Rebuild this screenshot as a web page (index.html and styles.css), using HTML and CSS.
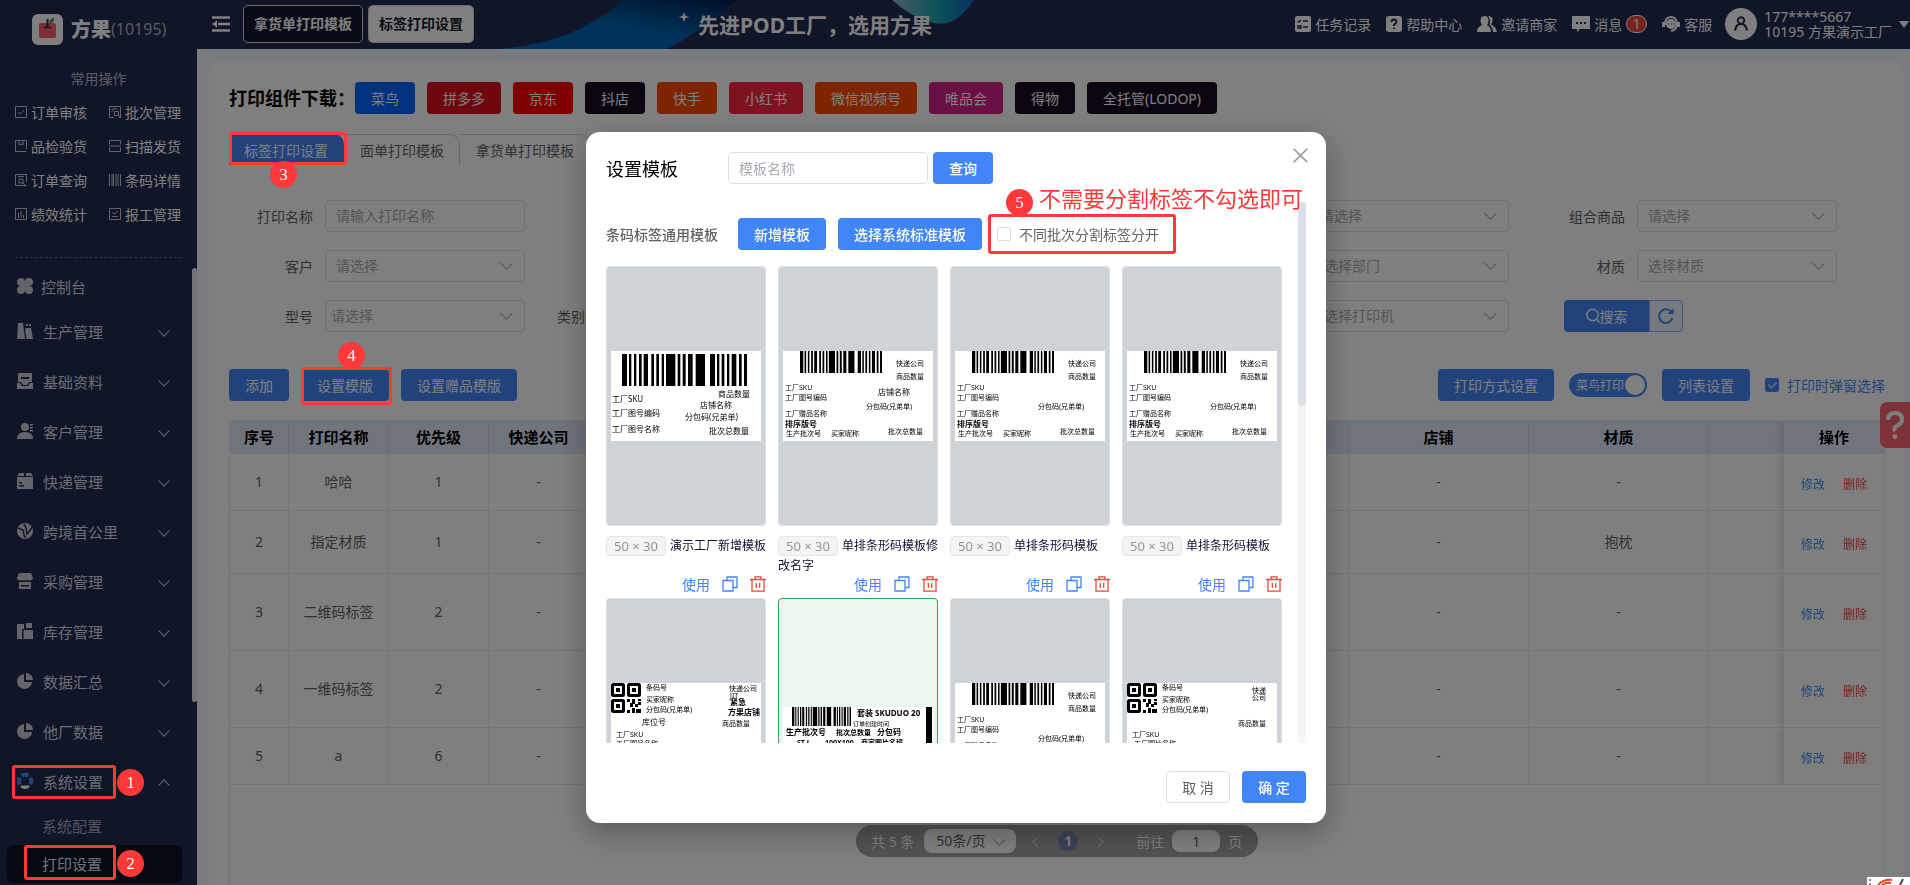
FILE: index.html
```html
<!DOCTYPE html>
<html lang="zh-CN">
<head>
<meta charset="utf-8">
<title>标签打印设置 - 方果</title>
<link rel="stylesheet" href="styles.css">
</head>
<body>
<svg class="defs" aria-hidden="true">
  <symbol id="bars" viewBox="96 0 375 10" preserveAspectRatio="none"><path d="M96 0h15v10h-15zM117 0h7v10h-7zM132 0h7v10h-7zM147 0h8v10h-8zM161 0h13v10h-13zM184 0h8v10h-8zM199 0h8v10h-8zM215 0h7v10h-7zM228 0h28v10h-28zM263 0h8v10h-8zM278 0h9v10h-9zM294 0h14v10h-14zM317 0h28v10h-28zM360 0h15v10h-15zM381 0h7v10h-7zM395 0h8v10h-8zM411 0h7v10h-7zM425 0h14v10h-14zM447 0h8v10h-8zM462 0h9v10h-9z"/></symbol>
  <symbol id="qr" viewBox="0 0 30 30"><g fill="none" stroke="#000" stroke-width="3"><rect x="1.500" y="1.500" width="11" height="11" rx="1"/><rect x="17.500" y="1.500" width="11" height="11" rx="1"/><rect x="1.500" y="17.500" width="11" height="11" rx="1"/></g><path d="M5 5h4v4H5zM21 5h4v4h-4zM5 21h4v4H5zM16 16h3v3h-3zM21 16h3v5h-3zM27 16h3v2h-3zM19 20h3v4h-3zM24 21h3v3h-3zM27 19h3v3h-3zM16 27h3v3h-3zM21 25h3v5h-3zM25 26h5v4h-5z"/></symbol>
  <symbol id="copy" viewBox="0 0 16 16"><path d="M1 4.500h10v10.500H1zM5 4.500V1h10v10.500h-4" fill="none" stroke="currentColor" stroke-width="1.300"/></symbol>
  <symbol id="trash" viewBox="0 0 16 16"><path d="M0 3.500h16M5 3V.8h6V3M2 3.800V15.200h12V3.800M6.300 7v5M9.700 7v5" fill="none" stroke="currentColor" stroke-width="1.300"/></symbol>
  <symbol id="label-plain" viewBox="0 0 150 90">
    <use href="#bars" x="17" y="0" width="82" height="22"/>
    <g class="t7"><text x="113" y="15">快递公司</text><text x="113" y="28">商品数量</text><text x="2" y="39">工厂SKU</text><text x="2" y="49">工厂图号编码</text><text x="83" y="58">分包码(兄弟单)</text><text x="2" y="65">工厂赠品名称</text><text x="3" y="85">生产批次号</text><text x="48" y="85">买家昵称</text><text x="105" y="83">批次总数量</text></g>
    <text class="t8 heavy" x="2" y="76">排序版号</text>
  </symbol>
</svg>

<div class="app">
  <aside class="side">
    <div class="brand">
      <svg width="31" height="31" viewBox="0 0 31 31"><rect width="31" height="31" rx="6" fill="#fff"/><path d="M9 9h13q2 0 2 2v11q0 2-2 2H9q-2 0-2-2V11q0-2 2-2z" fill="#ff5c6c"/><path d="M15.500 5v8M12 14q3.500-2 7 0" fill="none" stroke="#33374c" stroke-width="2"/><path d="M17 9q0-4 5-5q1 5-5 5z" fill="#42a03c"/></svg>
      <b>方果</b><span>(10195)</span>
    </div>
    <h2 class="side-title">常用操作</h2>
    <nav class="quick">
      <a href="#"><svg viewBox="0 0 12 12"><path d="M.5.500h11v11H.5zM3 6l2.300 2L9 4"/></svg>订单审核</a>
      <a href="#"><svg viewBox="0 0 12 12"><path d="M5 11.500H.5V.5h11v11H10M2.500 3h6M2.500 5h1.500M5.500 5.500h4v4h-4zM9.500 9.500l2 2"/></svg>批次管理</a>
      <a href="#"><svg viewBox="0 0 12 12"><path d="M11.500 9V.5H.5v11h11M4 1v4l2-1 2 1V1"/></svg>品检验货</a>
      <a href="#"><svg viewBox="0 0 12 12"><path d="M.5 4.500v-4h11v4M.5 7.500v4h11v-4M0 6h12"/></svg>扫描发货</a>
      <a href="#"><svg viewBox="0 0 12 12"><path d="M11.500 8V.5H.5v11h11M3 2.500h6M4 5h4v4H4zM8 9l2 2"/></svg>订单查询</a>
      <a href="#"><svg viewBox="0 0 12 12"><path d="M.5 0v12M3 0v12M4.500 0v12M7 0v12M9 0v12M11.500 0v12"/></svg>条码详情</a>
      <a href="#"><svg viewBox="0 0 12 12"><path d="M.5.500h11v11H.5zM3.500 5v5M6 3v7M8.500 7v3"/></svg>绩效统计</a>
      <a href="#"><svg viewBox="0 0 12 12"><path d="M.5.500h11v11H.5zM3 4l2 2 4-3M3 8.500h6"/></svg>报工管理</a>
    </nav>
    <nav class="menu">
      <a class="item home" href="#"><svg viewBox="0 0 16 16"><circle cx="4" cy="4" r="4"/><circle cx="12" cy="4" r="4"/><circle cx="4" cy="12" r="4"/><circle cx="12" cy="12" r="4"/><path d="M5 5h6v6H5z"/></svg>控制台</a>
      <a class="item" href="#"><svg viewBox="0 0 16 16"><path d="M1 0h5l2 16H0zM9 5h5l2 11H9.500L8 7zM9 1h2v2H9zM12 1h2v2h-2z"/></svg>生产管理<i class="chev"></i></a>
      <a class="item" href="#"><svg viewBox="0 0 16 16"><path fill-rule="evenodd" d="M1 0h14v9h-3l-2 3H6L4 9H1zM4 4v2h8V4zM0 10h3l2 3h6l2-3h3v6H0z"/></svg>基础资料<i class="chev"></i></a>
      <a class="item" href="#"><svg viewBox="0 0 16 16"><circle cx="8" cy="4" r="4"/><path d="M0 16q0-7 8-7t8 7zM13 1h3v1.500h-3zM13 4h3v1.500h-3zM13 7h3v1.500h-3z"/></svg>客户管理<i class="chev"></i></a>
      <a class="item" href="#"><svg viewBox="0 0 16 16"><path fill-rule="evenodd" d="M2 0h5v3H0zM9 0h5l2 3H9zM0 4h16v12H0zM2 9v1.500h3V9zM2 12v1.500h5V12z"/></svg>快递管理<i class="chev"></i></a>
      <a class="item" href="#"><svg viewBox="0 0 16 16"><circle cx="8" cy="8" r="8"/><path d="M1 5l5 2 1 5 2 3M7 1l2 4 1 6 4-5 1-2" fill="none" stroke="#222a50" stroke-width="1.500"/></svg>跨境首公里<i class="chev"></i></a>
      <a class="item" href="#"><svg viewBox="0 0 16 16"><path fill-rule="evenodd" d="M2 0h12l2 5q-1 3-3 2-2 1-3 0-2 1-4 0-2 1-3 0-3 1-3-2zM2 9h12v7H2zM4 12v1.500h8V12z"/></svg>采购管理<i class="chev"></i></a>
      <a class="item" href="#"><svg viewBox="0 0 16 16"><path d="M0 1h7v5H5v10H0zM9 0h6v5H9zM6.500 7H16v9H6.500z"/></svg>库存管理<i class="chev"></i></a>
      <a class="item" href="#"><svg viewBox="0 0 16 16"><path d="M7 1v8h8a7.500 7.500 0 1 1-8-8zM9 0a7 7 0 0 1 7 7H9z"/></svg>数据汇总<i class="chev"></i></a>
      <a class="item" href="#"><svg viewBox="0 0 16 16"><path d="M7 1v8h8a7.500 7.500 0 1 1-8-8zM9 0a7 7 0 0 1 7 7H9z"/></svg>他厂数据<i class="chev"></i></a>
      <a class="item" href="#"><svg viewBox="0 0 16 16"><g fill="none" stroke="#4285f6" stroke-width="4"><path d="M4.500 2.500Q8 .8 11.500 2.500M2.500 4.500q-1.500 3.500 0 7M13.500 4.500q1.500 3.500 0 7"/></g><path d="M3.500 12.500h9q.5 1.500-1 2.500-3.500 2-7 0-1.500-1-1-2.500z" fill="#fff"/></svg>系统设置<i class="chev up"></i></a>
      <a class="sub" href="#">系统配置</a>
      <a class="sub current" href="#">打印设置</a>
    </nav>
    <div class="side-thumb"></div>
  </aside>

  <div class="main">
    <header class="top">
      <svg class="banner" width="490" height="49" viewBox="0 0 490 49">
        <defs><linearGradient id="wave" x1="0" y1="1" x2="1" y2="0"><stop offset="0" stop-color="#0068b8"/><stop offset=".5" stop-color="#0066b4"/><stop offset="1" stop-color="#041a4c"/></linearGradient><linearGradient id="drop"><stop offset="0" stop-color="#8fb8c8"/><stop offset=".6" stop-color="#10a0b0"/><stop offset="1" stop-color="#1060c0"/></linearGradient></defs>
        <path d="M0 49Q78 45 128 0H242Q212 28 172 49z" fill="url(#wave)"/>
        <path d="M397 0q20 18 42 23t40-23z" fill="url(#drop)"/>
        <path d="M189 12l1.500 4 4 1-4 1-1.500 4-1.500-4-4-1 4-1z" fill="#fff"/>
        <text x="203" y="33">先进POD工厂，选用方果</text>
      </svg>
      <button class="fold" aria-label="收起菜单"><svg width="18" height="16" viewBox="0 0 18 16"><path d="M0 1.500h18M6 8h12M0 14.500h18" stroke="#fff" stroke-width="2.500"/><path d="M5 4.500v7L0 8z" fill="#fff"/></svg></button>
      <div class="page-tabs"><button>拿货单打印模板</button><button class="on">标签打印设置</button></div>
      <nav class="tools">
        <a href="#"><svg width="16" height="16" viewBox="0 0 16 16"><rect width="16" height="16" rx="2" fill="#fff"/><path d="M3 5l1 1 2-2M8 5h5M8 11h5M3 10h3v2H3z" fill="none" stroke="#222a50" stroke-width="1.400"/></svg>任务记录</a>
        <a href="#"><svg width="16" height="16" viewBox="0 0 16 16"><rect width="16" height="16" rx="3" fill="#fff"/><path d="M5.500 6q0-2.500 2.500-2.500T10.500 6Q10.500 7.500 8 8.500V10M8 11.500v1.500" fill="none" stroke="#222a50" stroke-width="1.800"/></svg>帮助中心</a>
        <a href="#"><svg width="20" height="16" viewBox="0 0 20 16"><path d="M7.500 0q4 0 4 4.500Q11.500 7 10 9q4 2 4 7H0q0-5 5-7Q3.500 7 3.500 4.500q0-4.500 4-4.500zM11 0q5 0 4.500 4.500 0 2-1.500 4 5 2 6 7.500h-4q0-4-3.500-7.500Q14 4 11 0z" fill="#fff"/></svg>邀请商家</a>
        <a href="#"><svg width="18" height="16" viewBox="0 0 18 16"><path d="M0 0h18v13H8l-3 3v-3H0z" fill="#fff"/><path d="M4 6h2v2H4zM8 6h2v2H8zM12 6h2v2h-2z" fill="#222a50"/></svg>消息<span class="count">1</span></a>
        <a href="#"><svg width="18" height="16" viewBox="0 0 18 16"><path d="M3 9V7q1-6 6-6t6 6v2q-1 5-6 6" fill="none" stroke="#fff" stroke-width="2"/><circle cx="9" cy="8" r="5" fill="#fff"/><path d="M0 6h3v5H0zM15 6h3v5h-3z" fill="#fff"/><path d="M6 8h1M9 8h1M11.500 8h1" stroke="#222a50" stroke-width="1.200"/></svg>客服</a>
      </nav>
      <div class="user">
        <svg width="32" height="32" viewBox="0 0 32 32"><circle cx="16" cy="16" r="16" fill="#fff"/><circle cx="16" cy="12.500" r="3.200" fill="none" stroke="#222a50" stroke-width="2"/><path d="M10 22.500q1-6.500 6-6.500t6 6.500" fill="none" stroke="#222a50" stroke-width="2.200"/></svg>
        <p>177****5667<br>10195 方果演示工厂</p><i class="caret"></i>
      </div>
    </header>

    <main class="panel">
      <div class="downloads">
        <h1>打印组件下载：</h1>
        <button class="btn b-cn">菜鸟</button><button class="btn b-pdd">拼多多</button><button class="btn b-jd">京东</button><button class="btn b-dark">抖店</button><button class="btn b-ks">快手</button><button class="btn b-xhs">小红书</button><button class="btn b-ks">微信视频号</button><button class="btn b-wph">唯品会</button><button class="btn b-dark">得物</button><button class="btn b-dark">全托管(LODOP)</button>
      </div>
      <div class="tabs"><button class="on">标签打印设置</button><button>面单打印模板</button><button>拿货单打印模板</button></div>

      <form class="filters">
        <div class="field"><label for="f1">打印名称</label><input id="f1" placeholder="请输入打印名称"></div>
        <div class="field"><label for="f2">快递公司</label><span class="sel"><select id="f2"><option>请选择</option></select></span></div>
        <div class="field"><label for="f3">店铺</label><span class="sel"><select id="f3"><option>请选择</option></select></span></div>
        <div class="field"><label for="f4">商品</label><span class="sel"><select id="f4"><option>请选择</option></select></span></div>
        <div class="field"><label for="f5">组合商品</label><span class="sel"><select id="f5"><option>请选择</option></select></span></div>
        <div class="field"><label for="f6">客户</label><span class="sel"><select id="f6"><option>请选择</option></select></span></div>
        <div class="field"><label for="f7">平台</label><span class="sel"><select id="f7"><option>请选择</option></select></span></div>
        <div class="field"><label for="f8">分类</label><span class="sel"><select id="f8"><option>请选择</option></select></span></div>
        <div class="field"><label for="f9">部门</label><span class="sel flush"><select id="f9"><option>请选择部门</option></select></span></div>
        <div class="field"><label for="f10">材质</label><span class="sel"><select id="f10"><option>选择材质</option></select></span></div>
        <div class="field"><label for="f11">型号</label><span class="sel tight"><select id="f11"><option>请选择</option></select></span></div>
        <div class="field"><label for="f12">类别打印名称</label><span class="sel"><select id="f12"><option>请选择</option></select></span></div>
        <div class="field"><label for="f13">模板</label><span class="sel"><select id="f13"><option>请选择</option></select></span></div>
        <div class="field"><label for="f14">打印机</label><span class="sel flush"><select id="f14"><option>请选择打印机</option></select></span></div>
        <div class="field search"><button type="button" class="go"><svg width="14" height="16" viewBox="0 0 14 16"><circle cx="6.500" cy="7" r="5.700" fill="none" stroke="currentColor" stroke-width="1.400"/><path d="M10.500 11l3 3.500" stroke="currentColor" stroke-width="1.400"/></svg>搜索</button><button type="button" class="reset" aria-label="重置"><svg width="16" height="16" viewBox="0 0 16 16"><path d="M13.700 4.500A6.800 6.800 0 1 0 14.500 10" fill="none" stroke="currentColor" stroke-width="2"/><path d="M15.500 0v6h-6z" fill="currentColor"/></svg></button></div>
      </form>

      <div class="bar">
        <button class="btn">添加</button><button class="btn">设置模版</button><button class="btn">设置赠品模版</button>
        <div class="bar-right">
          <button class="btn">打印方式设置</button>
          <button class="switch" role="switch" aria-checked="true">菜鸟打印<i></i></button>
          <button class="btn">列表设置</button>
          <label class="tick"><input type="checkbox" checked>打印时弹窗选择</label>
        </div>
      </div>

      <div class="table-wrap">
        <table>
          <colgroup><col class="c59"><col class="c100"><col class="c100"><col class="c100"><col class="c160"><col class="c200"><col class="c200"><col class="c200"><col class="c180"><col class="c180"><col class="c180"><col class="c100"></colgroup>
          <thead><tr><th>序号</th><th>打印名称</th><th>优先级</th><th>快递公司</th><th>客户</th><th>商品</th><th>组合商品</th><th>平台</th><th>店铺</th><th>材质</th><th>类别</th><th class="fix">操作</th></tr></thead>
          <tbody>
            <tr class="h57"><td>1</td><td>哈哈</td><td>1</td><td>-</td><td>-</td><td>-</td><td>-</td><td>-</td><td>-</td><td>-</td><td></td><td class="fix"><a href="#">修改</a><a href="#" class="del">删除</a></td></tr>
            <tr class="h63"><td>2</td><td>指定材质</td><td>1</td><td>-</td><td>-</td><td>-</td><td>-</td><td>-</td><td>-</td><td>抱枕</td><td></td><td class="fix"><a href="#">修改</a><a href="#" class="del">删除</a></td></tr>
            <tr class="h77"><td>3</td><td>二维码标签</td><td>2</td><td>-</td><td>-</td><td>-</td><td>-</td><td>-</td><td>-</td><td>-</td><td></td><td class="fix"><a href="#">修改</a><a href="#" class="del">删除</a></td></tr>
            <tr class="h77"><td>4</td><td>一维码标签</td><td>2</td><td>-</td><td>-</td><td>-</td><td>-</td><td>-</td><td>-</td><td>-</td><td></td><td class="fix"><a href="#">修改</a><a href="#" class="del">删除</a></td></tr>
            <tr class="h57"><td>5</td><td>a</td><td>6</td><td>-</td><td>-</td><td>-</td><td>-</td><td>-</td><td>-</td><td>-</td><td></td><td class="fix"><a href="#">修改</a><a href="#" class="del">删除</a></td></tr>
          </tbody>
        </table>
      </div>
    </main>
  </div>

  <div class="pager">
    <span>共 5 条</span><span class="sel"><select aria-label="每页条数"><option>50条/页</option></select></span>
    <button aria-label="上一页"><i class="arr left"></i></button><button class="num">1</button><button aria-label="下一页"><i class="arr"></i></button>
    <label for="goto">前往</label><input id="goto" value="1"><span>页</span>
  </div>
  <button class="help" aria-label="帮助"><svg width="18" height="28" viewBox="0 0 18 28"><path d="M2 9q0-7 7-7t7 6.500q0 4-4.500 6T9 20" fill="none" stroke="#fff" stroke-width="4"/><circle cx="9" cy="25.500" r="2.400" fill="#fff"/></svg></button>
</div>

<div class="mask">
  <section class="modal" role="dialog" aria-labelledby="dlg">
    <div class="modal-head"><h2 id="dlg">设置模板</h2><input placeholder="模板名称" aria-label="模板名称"><button class="btn strong">查询</button>
      <button class="close" aria-label="关闭"><svg width="15" height="15" viewBox="0 0 15 15"><path d="M.7.700l13.600 13.600M14.300.7L.7 14.300" stroke="#909399" stroke-width="1.500"/></svg></button></div>
    <div class="modal-body">
      <div class="scroll">
        <div class="modal-bar"><b>条码标签通用模板</b><button class="btn strong">新增模板</button><button class="btn strong">选择系统标准模板</button><label class="tick plain"><input type="checkbox">不同批次分割标签分开</label></div>
        <div class="cards">
          <article><div class="pic"><svg width="150" height="90" viewBox="0 0 150 90"><use href="#bars" x="11" y="3" width="125" height="32"/><g class="t8"><text x="107" y="46">商品数量</text><text x="89" y="57">店铺名称</text><text x="74" y="69">分包码(兄弟单)</text><text x="98" y="83">批次总数量</text><text x="1" y="51">工厂SKU</text><text x="1" y="65">工厂图号编码</text><text x="1" y="81">工厂图号名称</text></g></svg></div>
            <p><span class="size">50 × 30</span>演示工厂新增模板</p><div class="acts"><a href="#">使用</a><button aria-label="复制"><svg><use href="#copy"/></svg></button><button class="del" aria-label="删除"><svg><use href="#trash"/></svg></button></div></article>
          <article><div class="pic"><svg width="150" height="90" viewBox="0 0 150 90"><use href="#label-plain"/><text class="t8" x="95" y="44">店铺名称</text></svg></div>
            <p><span class="size">50 × 30</span>单排条形码模板修改名字</p><div class="acts"><a href="#">使用</a><button aria-label="复制"><svg><use href="#copy"/></svg></button><button class="del" aria-label="删除"><svg><use href="#trash"/></svg></button></div></article>
          <article><div class="pic"><svg width="150" height="90" viewBox="0 0 150 90"><use href="#label-plain"/></svg></div>
            <p><span class="size">50 × 30</span>单排条形码模板</p><div class="acts"><a href="#">使用</a><button aria-label="复制"><svg><use href="#copy"/></svg></button><button class="del" aria-label="删除"><svg><use href="#trash"/></svg></button></div></article>
          <article><div class="pic"><svg width="150" height="90" viewBox="0 0 150 90"><use href="#label-plain"/></svg></div>
            <p><span class="size">50 × 30</span>单排条形码模板</p><div class="acts"><a href="#">使用</a><button aria-label="复制"><svg><use href="#copy"/></svg></button><button class="del" aria-label="删除"><svg><use href="#trash"/></svg></button></div></article>
          <article><div class="pic"><svg width="150" height="90" viewBox="0 0 150 90"><use href="#qr" width="30" height="30"/><g class="t7"><text x="35" y="7">条码号</text><text x="35" y="19">买家昵称</text><text x="35" y="29">分包码(兄弟单)</text><text x="118" y="8">快递公司</text><text x="119" y="15">JIT</text><text x="111" y="43">商品数量</text><text x="5" y="54">工厂SKU</text><text x="5" y="63">工厂图号名称</text></g><g class="t8"><text x="31" y="42">库位号</text><text class="heavy" x="119" y="22">紧急</text><text class="heavy" x="117" y="32">方果店铺</text></g></svg></div></article>
          <article class="chosen"><div class="pic"><svg width="150" height="42" viewBox="0 0 150 42"><use href="#bars" x="9" y="0" width="59" height="19"/><path d="M143 0h6v42h-6z"/><g class="t8 heavy"><text x="74" y="9">套装</text><text x="92" y="9">SKUDUO 20</text><text x="3" y="28">生产批次号</text><text x="94" y="28">分包码</text></g><g class="t7 heavy"><text x="53" y="28">批次总数量</text><text x="14" y="38">ST-L</text><text x="42" y="38">100X100</text><text x="78" y="38">商家图片名称</text></g><text class="t6" x="70" y="19">订单创建时间</text></svg></div></article>
          <article><div class="pic"><svg width="150" height="90" viewBox="0 0 150 90"><use href="#label-plain"/></svg></div></article>
          <article><div class="pic"><svg width="150" height="90" viewBox="0 0 150 90"><use href="#qr" width="30" height="30"/><g class="t7"><text x="35" y="7">条码号</text><text x="35" y="19">买家昵称</text><text x="35" y="29">分包码(兄弟单)</text><text x="125" y="10">快递</text><text x="125" y="17">公司</text><text x="111" y="43">商品数量</text><text x="5" y="54">工厂SKU</text><text x="7" y="63">工厂图片名称</text></g></svg></div></article>
        </div>
      </div>
      <div class="track"><div class="thumb"></div></div>
    </div>
    <footer><button class="btn ghost">取 消</button><button class="btn strong">确 定</button></footer>
  </section>
</div>

<div class="notes" aria-hidden="true">
  <i class="frame n1"></i><b class="dot d1">1</b>
  <i class="frame n2"></i><b class="dot d2">2</b>
  <i class="frame n3"></i><b class="dot d3">3</b>
  <i class="frame n4"></i><b class="dot d4">4</b>
  <i class="frame n5"></i><b class="dot d5">5</b><span class="tip">不需要分割标签不勾选即可</span>
  <svg class="ime" width="43" height="8" viewBox="0 0 43 8"><path d="M0 0h43v8H0z" fill="#fff"/><path d="M3 2v2M3 6v2" stroke="#888" stroke-width="2"/><path d="M11 8q6-6 14-5M15 8q4-3 9-2" fill="none" stroke="#f0441e" stroke-width="2"/><path d="M33 8l3-6" stroke="#444" stroke-width="2"/></svg>
</div>
</body>
</html>
```
FILE: styles.css
```css
* { box-sizing: border-box; }
body, button, input, select { font-family: "Noto Sans", "Noto Sans CJK SC", sans-serif; font-size: 14px; }
body { margin: 0; height: 100vh; overflow: hidden; color: #606266; background: #f3f6fc; }
h1, h2, p { margin: 0; }
a { color: inherit; text-decoration: none; }
button { border: 0; padding: 0 0 1px; background: none; color: inherit; cursor: pointer; }
.defs { position: absolute; width: 0; height: 0; }
.app { display: flex; height: 100vh; }

/* Sidebar */
.side { position: relative; flex: none; width: 197px; height: 100vh; overflow: hidden; background: #222a50; color: #fff; }
.brand { display: flex; align-items: center; height: 31px; margin: 14px 0 0 32px; font-size: 16px; line-height: 28px; }
.brand b { margin-left: 8px; font-size: 20px; font-weight: 900; }
.brand span { padding-bottom: 2px; color: #b0b4c4; }
.side-title { margin-top: 24px; line-height: 20px; font-size: 14px; font-weight: 400; text-align: center; color: #b8bcca; }
.quick { display: grid; grid-template-columns: 94px 1fr; grid-auto-rows: 34px; margin: 6px 15px 0; padding-bottom: 26px; border-bottom: 1px dashed #5a6180; }
.quick a { display: flex; align-items: center; gap: 4px; }
.quick svg { width: 12px; height: 12px; fill: none; stroke: #c8cad4; }
.menu { margin-top: 9px; font-size: 15px; color: #d8dae2; }
.item { display: flex; align-items: center; height: 50px; padding: 0 27px 2px 17px; }
.item.home { height: 40px; }
.item svg { width: 16px; height: 16px; margin-right: 10px; fill: #c8cad4; overflow: visible; }
.item.home svg { margin-right: 8px; }
.chev { width: 8px; height: 8px; margin: 0 2px 0 auto; border: solid #c8cad4; border-width: 0 1px 1px 0; transform: rotate(45deg); }
.chev.up { margin-top: 8px; transform: rotate(225deg); }
.sub { display: flex; align-items: center; height: 38px; margin: 0 15px 0 7px; padding: 0 0 2px 35px; border-radius: 6px; color: #a4a8ba; }
.sub.current { background: #0d1224; color: #e4e6ee; }
.side-thumb { position: absolute; right: 0; top: 268px; width: 5px; height: 434px; border-radius: 3px; background: #e4e6ec; }

/* Header */
.main { flex: 1; min-width: 0; display: flex; flex-direction: column; }
.top { position: relative; display: flex; align-items: center; flex: none; height: 49px; padding: 0 1px 1px 15px; background: #222a50; color: #fff; }
.banner { position: absolute; left: 298px; top: 0; }
.banner text { font-size: 21px; font-weight: 700; fill: #fff; }
.fold { display: flex; }
.page-tabs { position: relative; display: flex; gap: 5px; margin-left: 13px; }
.page-tabs button { height: 38px; padding: 0 10px 2px; border: 1px solid #d8dae2; border-radius: 5px; background: #12162c; font-weight: 700; }
.page-tabs .on { background: #fff; color: #12162c; }
.tools { display: flex; align-items: center; gap: 15px; margin-left: auto; }
.tools a { display: flex; align-items: center; gap: 4px; }
.count { width: 21px; height: 18px; border: 1px solid #fff; border-radius: 9px; background: #f0453a; line-height: 16px; text-align: center; }
.user { display: flex; align-items: center; gap: 7px; margin-left: 13px; line-height: 15px; }
.caret { border: 5px solid transparent; border-top: 7px solid #fff; border-bottom: 0; }

/* Content panel */
.panel { flex: 1; min-height: 0; display: flex; flex-direction: column; margin: 13px 6px 0 12px; padding: 20px 19px 0 20px; border-radius: 12px 12px 0 0; background: #fff; overflow: hidden; }
.btn { height: 32px; padding: 0 16px 1px; border-radius: 4px; background: #4285f6; color: #fff; white-space: nowrap; }
.strong { font-weight: 500; }
.downloads { display: flex; align-items: center; gap: 12px; }
.downloads h1 { width: 114px; color: #000; font-size: 18px; line-height: 32px; white-space: nowrap; }
.b-cn { background: #0064ff; }
.b-pdd { background: #de0e1c; }
.b-jd { background: #fe0000; }
.b-dark { background: #170a20; }
.b-ks { background: #fe4800; }
.b-xhs { background: #ff2442; }
.b-wph { background: #d62088; }
.tabs { display: flex; margin-top: 20px; }
.tabs button { height: 31px; padding: 0 15px 1px 16px; border: solid #cfd3de; border-width: 1px 1px 0 0; border-radius: 0 10px 0 0; }
.tabs .on { padding-left: 15px; border-color: #4285f6; background: #4285f6; color: #fff; }
.filters { display: flex; flex-wrap: wrap; gap: 18px 32px; margin-top: 35px; }
.field { display: flex; align-items: center; justify-content: flex-end; gap: 12px; width: 296px; white-space: nowrap; }
.field label { padding-bottom: 1px; }
.field input, .sel select { width: 200px; height: 32px; padding: 0 10px 1px; border: 1px solid #dcdfe6; border-radius: 4px; background: #fff; color: #a8abb2; outline: 0; appearance: none; }
.sel { position: relative; display: block; }
.sel.tight select { padding-left: 5px; }
.sel.flush select { padding-left: 0; }
.sel::after { content: ""; position: absolute; right: 14px; top: 9px; width: 8px; height: 8px; border: solid #a8abb2; border-width: 0 1px 1px 0; transform: rotate(45deg); pointer-events: none; }
input::placeholder { color: #a8abb2; opacity: 1; }
.search { justify-content: flex-start; gap: 0; padding-left: 23px; }
.go { display: flex; align-items: center; justify-content: center; width: 85px; height: 32px; border-radius: 4px 0 0 4px; background: #4285f6; color: #fff; }
.reset { display: flex; align-items: center; justify-content: center; width: 34px; height: 32px; border: 1px solid #8db5fa; border-radius: 0 4px 4px 0; background: #eef4ff; color: #4285f6; }
.bar { display: flex; align-items: center; gap: 12px; margin-top: 37px; }
.bar-right { display: flex; align-items: center; gap: 15px; margin-left: auto; }
.switch { display: flex; align-items: center; justify-content: space-between; width: 78px; height: 24px; padding: 0 2px 0 7px; border-radius: 12px; background: #4285f6; color: #fff; font-size: 12px; white-space: nowrap; }
.switch i { flex: none; width: 20px; height: 20px; border-radius: 10px; background: #fff; }
.tick { display: flex; align-items: center; gap: 8px; color: #4285f6; }
.tick input { position: relative; width: 14px; height: 14px; margin: 0; border: 1px solid #dcdfe6; border-radius: 2px; background: #fff; appearance: none; }
.tick input:checked { border-color: #4285f6; background: #4285f6; }
.tick input:checked::after { content: ""; position: absolute; left: 4px; top: 1px; width: 4px; height: 7px; border: solid #fff; border-width: 0 1px 1px 0; transform: rotate(45deg); }

/* Table */
.table-wrap { flex: 1; min-height: 0; margin-top: 19px; border: 1px solid #e6eaf4; border-bottom: 0; border-radius: 6px 0 0 0; overflow: hidden; }
table { width: 1759px; table-layout: fixed; border-collapse: separate; border-spacing: 0; text-align: center; }
th, td { padding: 0 0 2px; border: solid #e6eaf4; border-width: 0 1px 1px 0; background: #fff; }
th { height: 33px; border-color: #cfd6e6; border-bottom-color: #e6eaf4; background: #e1e9fa; color: #000; font-size: 15px; }
.c59 { width: 59px; } .c100 { width: 100px; } .c160 { width: 160px; } .c180 { width: 180px; } .c200 { width: 200px; }
.h57 { height: 57px; } .h63 { height: 63px; } .h77 { height: 77px; }
.fix { position: sticky; right: 0; border-right: 0; font-size: 12px; box-shadow: -4px 0 8px rgba(0, 0, 0, .12); clip-path: inset(0 0 0 -12px); }
td.fix { padding-top: 6px; }
th.fix { font-size: 15px; }
.fix a { margin: 0 9px; color: #4285f6; }
.fix a.del, .acts .del { color: #f0453a; }

/* Floating controls */
.pager { position: absolute; left: 856px; top: 825px; display: flex; align-items: center; width: 402px; height: 32px; padding: 0 15px; border-radius: 16px; background: #a4a4a4; color: #fff; white-space: nowrap; }
.pager .sel { margin: 0 11px 0 10px; }
.pager .sel select { width: 92px; height: 24px; padding: 0 12px 1px; border: 0; border-radius: 8px; color: #606266; }
.pager .sel::after { right: 12px; top: 6px; }
.pager button { width: 22px; height: 20px; }
.pager .num { width: 20px; margin: 0 9px; border-radius: 10px; background: #7882ac; font-weight: 700; }
.pager label { margin: 0 8px 0 27px; }
.pager #goto { width: 48px; height: 22px; margin-right: 8px; border: 0; border-radius: 8px; background: #fff; color: #606266; text-align: center; }
.arr { display: inline-block; width: 8px; height: 8px; border: solid #e0e0e0; border-width: 1px 1px 0 0; transform: rotate(45deg); }
.arr.left { transform: rotate(225deg); }
.help { position: absolute; right: 0; top: 402px; display: flex; align-items: center; justify-content: center; width: 30px; height: 46px; border-radius: 7px 0 0 7px; background: #fa6473; }

/* Dialog */
.mask { position: absolute; inset: 0; display: flex; justify-content: center; align-items: flex-start; padding: 132px 0 0 2px; background: rgba(0, 0, 0, .5); }
.modal { width: 740px; padding: 20px; border-radius: 14px; background: #fff; box-shadow: 0 10px 30px rgba(0, 0, 0, .3); }
.modal-head { display: flex; align-items: center; }
.modal-head h2 { width: 122px; color: #000; font-size: 18px; font-weight: 400; }
.modal-head input { width: 200px; height: 32px; margin-right: 5px; padding: 0 10px; border: 1px solid #dcdfe6; border-radius: 4px; }
.close { display: flex; align-self: flex-start; margin: -4px -2px 0 auto; }
.modal-body { display: flex; justify-content: space-between; height: calc(100vh - 344px); margin-top: 18px; }
.scroll { width: 676px; overflow: hidden; padding-top: 16px; }
.modal-bar { display: flex; align-items: center; gap: 12px; white-space: nowrap; }
.modal-bar b { margin-right: 8px; font-weight: 500; }
.tick.plain { margin-left: 3px; color: #606266; }
.track { width: 8px; background: #f5f5f5; }
.thumb { height: 204px; border-radius: 4px; background: #dddfe8; }
.cards { display: grid; grid-template-columns: repeat(4, 160px); grid-auto-rows: 332px; gap: 0 12px; margin-top: 16px; }
.pic { display: flex; align-items: center; justify-content: center; height: 260px; border: 1px solid #dcdfe6; border-radius: 4px; background: #cfd3d8; }
.pic svg { background: #fff; }
.chosen .pic { border-color: #2fa34e; background: #ebf6ee; }
.cards p { height: 40px; margin-top: 10px; color: #101030; font-size: 12px; line-height: 20px; }
.size { display: inline-block; height: 20px; margin-right: 4px; padding: 0 7px; border: 1px solid #e4e5e8; border-radius: 4px; background: #f4f4f5; color: #909399; font-size: 13px; line-height: 18px; vertical-align: top; }
.acts { display: flex; align-items: center; justify-content: flex-end; gap: 12px; height: 16px; color: #4285f6; }
.acts button { display: flex; }
.acts svg { width: 16px; height: 16px; }
.t6 { font-size: 6px; } .t7 { font-size: 7px; } .t8 { font-size: 8px; }
.heavy { font-weight: 700; }
.modal footer { display: flex; justify-content: flex-end; gap: 12px; margin-top: 28px; }
.ghost { border: 1px solid #dcdfe6; background: #fff; color: #606266; }
.modal footer .btn { width: 64px; padding: 0; }

/* Step markers drawn over the screen */
.notes { position: absolute; inset: 0; pointer-events: none; color: #ff3838; }
.frame { position: absolute; border: 3px solid #ff3838; border-radius: 3px; }
.dot { position: absolute; width: 27px; height: 27px; border-radius: 14px; background: #ff3838; color: #fff; font: 17px/27px "Liberation Serif", serif; text-align: center; }
.n1 { left: 12px; top: 765px; width: 104px; height: 34px; } .d1 { left: 117px; top: 769px; }
.n2 { left: 24px; top: 845px; width: 92px; height: 35px; } .d2 { left: 117px; top: 850px; }
.n3 { left: 229px; top: 132px; width: 118px; height: 33px; } .d3 { left: 270px; top: 161px; }
.n4 { left: 301px; top: 367px; width: 91px; height: 38px; } .d4 { left: 338px; top: 342px; }
.n5 { left: 988px; top: 214px; width: 188px; height: 40px; } .d5 { left: 1006px; top: 189px; }
.tip { position: absolute; left: 1039px; top: 182px; font-size: 22px; line-height: 32px; white-space: nowrap; }
.ime { position: absolute; right: 0; bottom: 0; }
```
